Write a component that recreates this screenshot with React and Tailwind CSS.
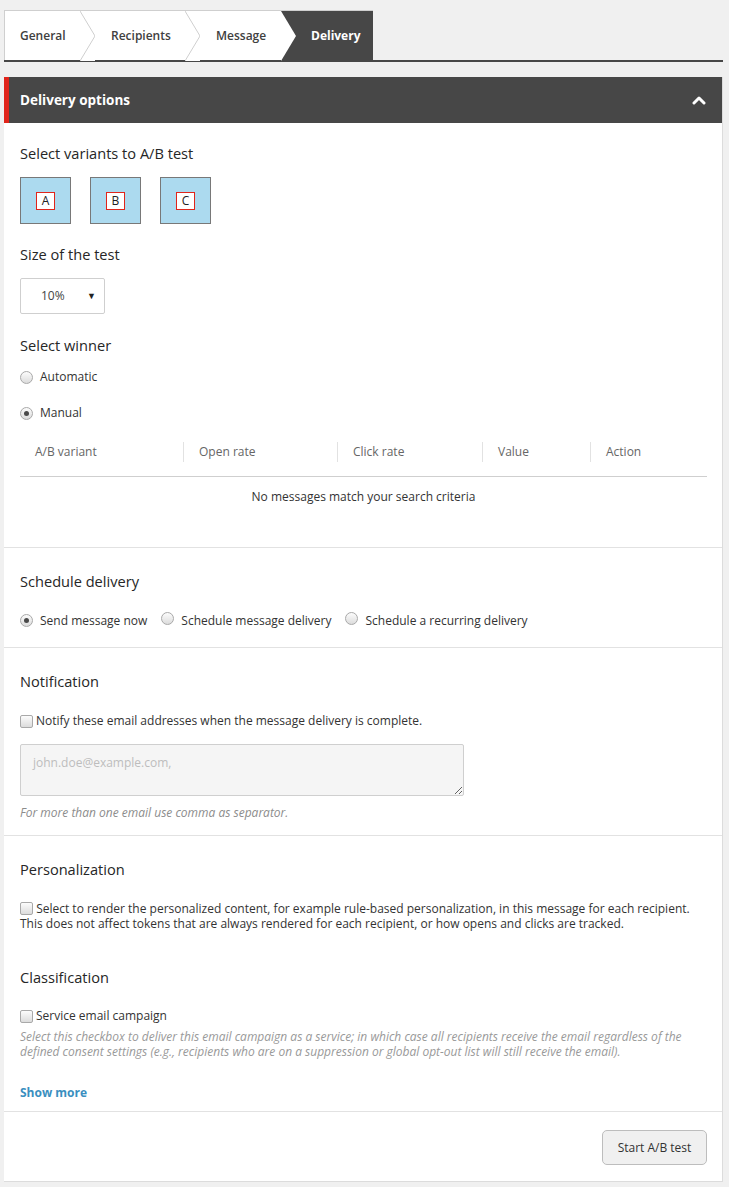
import React from 'react';

const Radio = ({ checked }) => (
  <span className="inline-flex items-center justify-center w-[13px] h-[13px] rounded-full border border-[#a9a9a9] bg-gradient-to-b from-[#fcfcfc] to-[#dcdcdc] shrink-0">
    {checked && <span className="w-[5px] h-[5px] rounded-full bg-[#4a4a4a]" />}
  </span>
);

const Checkbox = () => (
  <span className="inline-block w-[13px] h-[13px] rounded-[2px] border border-[#a9a9a9] bg-gradient-to-b from-[#fcfcfc] to-[#dcdcdc] shrink-0 align-[-2px]" />
);

const Sep = ({ dark }) => (
  <svg width="15" height="50" viewBox="0 0 15 50" className="shrink-0 block">
    {dark ? (
      <>
        <rect x="0" y="0" width="15" height="50" fill="#474747" />
        <polygon points="0,0 15,25 0,50" fill="#ffffff" />
      </>
    ) : (
      <>
        <rect x="0" y="0" width="15" height="50" fill="#ffffff" />
        <polyline points="0,0 15,25 0,50" fill="none" stroke="#cfcfcf" strokeWidth="1" />
      </>
    )}
  </svg>
);

const variants = ['A', 'B', 'C'];
const columns = [
  { label: 'A/B variant', w: 'w-[163px]' },
  { label: 'Open rate', w: 'w-[154px]' },
  { label: 'Click rate', w: 'w-[145px]' },
  { label: 'Value', w: 'w-[108px]' },
  { label: 'Action', w: 'flex-1' },
];

const App = () => {
  return (
    <div
      className="min-h-screen bg-[#f0f0f0] pt-[10px] px-[4px] pb-[6px] text-[12px] text-[#333]"
      style={{ fontFamily: '"Open Sans", "Noto Sans", sans-serif' }}
    >
      {/* Tabs */}
      <div className="w-[719px] border-b-2 border-[#474747]">
        <div className="flex h-[50px] w-[369px] border-t border-l border-[#cfcfcf] text-[12px] font-semibold">
          <div className="w-[75px] bg-white flex items-center pl-[15px] text-[#404040]">General</div>
          <Sep />
          <div className="w-[90px] bg-white flex items-center pl-4 text-[#404040]">Recipients</div>
          <Sep />
          <div className="w-[81px] bg-white flex items-center pl-4 text-[#404040]">Message</div>
          <Sep dark />
          <div className="w-[77px] bg-[#474747] flex items-center pl-[15px] text-white font-bold">Delivery</div>
        </div>
      </div>

      {/* Panel */}
      <div className="mt-[15px] w-[719px] bg-white border-r border-b border-[#dcdcdc]">
        <div className="h-[46px] bg-[#474747] border-l-[5px] border-[#e0251b] flex items-center justify-between pl-[11px] pr-[16px]">
          <span className="text-white text-[13.5px] font-bold">Delivery options</span>
          <svg width="14" height="10" viewBox="0 0 14 10">
            <polyline points="2,8 7,3 12,8" fill="none" stroke="#ffffff" strokeWidth="3" strokeLinecap="round" strokeLinejoin="round" />
          </svg>
        </div>

        {/* A/B test */}
        <div className="pl-4 pr-[15px] pt-5 pb-[42px]">
          <h3 className="text-[14.6px] leading-5 text-[#262626]">Select variants to A/B test</h3>
          <div className="mt-[14px] flex gap-[19px]">
            {variants.map((v) => (
              <div key={v} className="w-[51px] h-[47px] bg-[#acdaef] border border-[#787878] flex items-center justify-center">
                <span className="w-[19px] h-[18px] bg-white border border-[#e0251b] flex items-center justify-center text-[12px] leading-none text-[#222]">
                  {v}
                </span>
              </div>
            ))}
          </div>

          <h3 className="mt-5 text-[14.6px] leading-5 text-[#262626]">Size of the test</h3>
          <div className="mt-[14px] w-[85px] h-[36px] border border-[#cfcfcf] rounded-[2px] flex items-center justify-between pl-5 pr-[8px] text-[#444]">
            <span>10%</span>
            <span className="text-[9px] text-[#222]">▼</span>
          </div>

          <h3 className="mt-[21px] text-[14.6px] leading-5 text-[#262626]">Select winner</h3>
          <div className="mt-[14px] flex items-center gap-[7px] leading-4">
            <Radio />
            <span>Automatic</span>
          </div>
          <div className="mt-[20px] flex items-center gap-[7px] leading-4">
            <Radio checked />
            <span>Manual</span>
          </div>

          <div className="mt-[16px] h-[40px] border-b border-[#cfcfcf] flex items-start pt-[5px] text-[#666]">
            {columns.map((c, i) => (
              <div
                key={c.label}
                className={`${c.w} h-[20px] flex items-center pl-[15px] ${i > 0 ? 'border-l border-[#e2e2e2]' : ''}`}
              >
                {c.label}
              </div>
            ))}
          </div>
          <p className="mt-[12px] text-center leading-4 text-[#333]">No messages match your search criteria</p>
        </div>

        {/* Schedule delivery */}
        <div className="border-t border-[#e2e2e2] pl-4 pr-[15px] pt-[23px] pb-[18px]">
          <h3 className="text-[14.6px] leading-5 text-[#262626]">Schedule delivery</h3>
          <div className="mt-[21px] flex items-center leading-4">
            <Radio checked />
            <span className="ml-[7px]">Send message now</span>
            <span className="ml-[14px]"><Radio /></span>
            <span className="ml-[7px]">Schedule message delivery</span>
            <span className="ml-[14px]"><Radio /></span>
            <span className="ml-[7px]">Schedule a recurring delivery</span>
          </div>
        </div>

        {/* Notification */}
        <div className="border-t border-[#e2e2e2] pl-4 pr-[15px] pt-[23px] pb-[14px]">
          <h3 className="text-[14.6px] leading-5 text-[#262626]">Notification</h3>
          <div className="mt-[22px] flex items-center gap-[3px] leading-4">
            <Checkbox />
            <span>Notify these email addresses when the message delivery is complete.</span>
          </div>
          <textarea
            placeholder="john.doe@example.com,"
            className="mt-[15px] block w-[444px] h-[52px] bg-[#f5f5f5] border border-[#cfcfcf] rounded-[2px] px-[12px] pt-[10px] pb-[4px] text-[12px] leading-4 placeholder:text-[#bdbdbd] outline-none resize-y"
          />
          <p className="mt-[9px] italic text-[#8c8c8c] leading-4">For more than one email use comma as separator.</p>
        </div>

        {/* Personalization / Classification */}
        <div className="border-t border-[#e2e2e2] pl-4 pr-[15px] pt-[23px] pb-[10px]">
          <h3 className="text-[14.6px] leading-5 text-[#262626]">Personalization</h3>
          <p className="mt-[22px] leading-[15px]">
            <Checkbox />{' '}
            Select to render the personalized content, for example rule-based personalization, in this message for each recipient. This does not affect tokens that are always rendered for each recipient, or how opens and clicks are tracked.
          </p>

          <h3 className="mt-[36px] text-[14.6px] leading-5 text-[#262626]">Classification</h3>
          <div className="mt-[21px] flex items-center gap-[3px] leading-4">
            <Checkbox />
            <span>Service email campaign</span>
          </div>
          <p className="mt-[5px] max-w-[675px] italic text-[#999] leading-[15px] text-[12px]">
            Select this checkbox to deliver this email campaign as a service; in which case all recipients receive the email regardless of the defined consent settings (e.g., recipients who are on a suppression or global opt-out list will still receive the email).
          </p>

          <a href="#" className="mt-[26px] block leading-4 font-bold text-[#3a8fc0]">Show more</a>
        </div>

        {/* Footer */}
        <div className="border-t border-[#e2e2e2] flex justify-end pt-[18px] pb-[16px] pr-[15px]">
          <button className="w-[105px] h-[35px] rounded-[5px] border border-[#bdbdbd] bg-[#f0f0f0] text-[12px] text-[#333]">
            Start A/B test
          </button>
        </div>
      </div>
    </div>
  );
};

export default App;
